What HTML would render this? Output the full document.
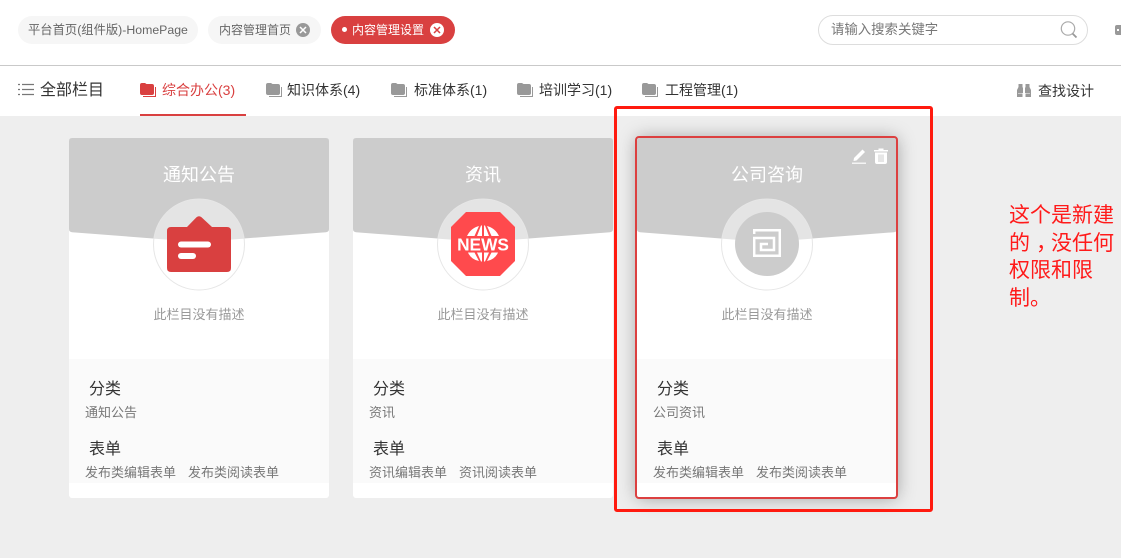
<!DOCTYPE html>
<html lang="zh"><head><meta charset="utf-8"><title>内容管理设置</title>
<style>
*{box-sizing:border-box}
html,body{margin:0;padding:0}
body{width:1121px;height:558px;overflow:hidden;position:relative;background:#fff;font-family:"Liberation Sans","Noto Sans CJK SC",sans-serif;color:#333}
.a,.t{position:absolute}
.t{white-space:nowrap;line-height:20px;height:20px}
.tab{position:absolute;top:16px;height:28px;border-radius:14px;background:#f6f6f6}
.card{position:absolute;top:138px;width:260px;height:360px;background:#fff;border-radius:3px}
.foot{position:absolute;left:0;top:221px;width:260px;height:124px;background:#fafafa}
.hd{position:absolute;left:0;top:0}
.title{position:absolute;left:0;width:260px;text-align:center;top:25px;line-height:24px;font-size:18px;color:#fff}
.desc{position:absolute;left:0;width:260px;text-align:center;top:167px;line-height:20px;font-size:13px;color:#999}
.h{position:absolute;left:20px;font-size:16px;line-height:20px;color:#333}
.s{position:absolute;left:16px;font-size:13px;line-height:20px;color:#777;white-space:nowrap}
.nav{font-size:14px;color:#333;top:80px}
</style></head><body>

<div class="tab" style="left:18px;width:180px"></div>
<div class="t" style="left:28px;top:20px;font-size:12.3px;color:#666">平台首页(组件版)-HomePage</div>
<div class="tab" style="left:208px;width:113px"></div>
<div class="t" style="left:219px;top:20px;font-size:12px;color:#666">内容管理首页</div>
<svg class="a" style="left:296px;top:23px" width="14" height="14" viewBox="0 0 14 14"><circle cx="7" cy="7" r="7" fill="#999"/><path d="M4 4l6 6M10 4l-6 6" stroke="#fff" stroke-width="1.500"/></svg>
<div class="tab" style="left:331px;width:124px;background:#d94040"></div>
<div class="a" style="left:342px;top:27px;width:5px;height:5px;border-radius:50%;background:#fff"></div>
<div class="t" style="left:352px;top:20px;font-size:12px;color:#fff">内容管理设置</div>
<svg class="a" style="left:430px;top:23px" width="14" height="14" viewBox="0 0 14 14"><circle cx="7" cy="7" r="7" fill="#fff"/><path d="M4 4l6 6M10 4l-6 6" stroke="#d94040" stroke-width="1.500"/></svg>

<div class="a" style="left:818px;top:15px;width:270px;height:30px;border:1px solid #ddd;border-radius:15px;background:#fff"></div>
<div class="t" style="left:831px;top:20px;font-size:13.4px;color:#777">请输入搜索关键字</div>
<svg class="a" style="left:1060px;top:20px" width="18" height="20" viewBox="0 0 18 20"><circle cx="8" cy="8.500" r="6.700" fill="none" stroke="#aaa" stroke-width="1.200"/><path d="M12.500 13.500l4 4" stroke="#999" stroke-width="1.800"/></svg>
<div class="a" style="left:1115px;top:25px;width:6px;height:10px;background:#999;border-radius:2px 0 0 2px"></div>
<div class="a" style="left:1117px;top:29px;width:2px;height:2px;background:#fff"></div>

<div class="a" style="left:0;top:65px;width:1121px;height:1px;background:#c9c9c9"></div>
<div class="a" style="left:0;top:116px;width:1121px;height:442px;background:#eee"></div>

<svg class="a" style="left:18px;top:83px" width="17" height="14" viewBox="0 0 17 14"><path d="M0 1.500h2M4 1.500h12M0 6.500h2M4 6.500h12M0 11.500h2M4 11.500h12" stroke="#777" stroke-width="1.300"/></svg>
<div class="t" style="left:40px;top:81px;font-size:16px;color:#333">全部栏目</div>

<svg class="a" style="left:140px;top:82px" width="17" height="16" viewBox="0 0 17 16"><path d="M0 3q0-2 2-2h3l1.500 1H12q2 0 2 2V11q0 2-2 2H2q-2 0-2-2z" fill="#d94040"/><path d="M15.500 5v9.500H3" fill="none" stroke="#d94040" stroke-width="1"/></svg>
<div class="t nav" style="left:162px;color:#d94040">综合办公(3)</div>
<div class="a" style="left:140px;top:114px;width:106px;height:2px;background:#d94040"></div>

<svg class="a" style="left:266px;top:82px" width="17" height="16" viewBox="0 0 17 16"><path d="M0 3q0-2 2-2h3l1.500 1H12q2 0 2 2V11q0 2-2 2H2q-2 0-2-2z" fill="#999"/><path d="M15.500 5v9.500H3" fill="none" stroke="#999" stroke-width="1"/></svg>
<div class="t nav" style="left:287px">知识体系(4)</div>
<svg class="a" style="left:391px;top:82px" width="17" height="16" viewBox="0 0 17 16"><path d="M0 3q0-2 2-2h3l1.500 1H12q2 0 2 2V11q0 2-2 2H2q-2 0-2-2z" fill="#999"/><path d="M15.500 5v9.500H3" fill="none" stroke="#999" stroke-width="1"/></svg>
<div class="t nav" style="left:414px">标准体系(1)</div>
<svg class="a" style="left:517px;top:82px" width="17" height="16" viewBox="0 0 17 16"><path d="M0 3q0-2 2-2h3l1.500 1H12q2 0 2 2V11q0 2-2 2H2q-2 0-2-2z" fill="#999"/><path d="M15.500 5v9.500H3" fill="none" stroke="#999" stroke-width="1"/></svg>
<div class="t nav" style="left:539px">培训学习(1)</div>
<svg class="a" style="left:642px;top:82px" width="17" height="16" viewBox="0 0 17 16"><path d="M0 3q0-2 2-2h3l1.500 1H12q2 0 2 2V11q0 2-2 2H2q-2 0-2-2z" fill="#999"/><path d="M15.500 5v9.500H3" fill="none" stroke="#999" stroke-width="1"/></svg>
<div class="t nav" style="left:665px">工程管理(1)</div>

<svg class="a" style="left:1017px;top:84px" width="14" height="13" viewBox="0 0 14 13"><path d="M1.500 0H5.500V3.500H6V9H1V13H0V6L1.500 3ZM8.500 0H12.500V3L14 6V13H13V9H8V3.500H8.500ZM0 9.500H5.500V13H0ZM8.500 9.500H14V13H8.500Z" fill="#999"/></svg>
<div class="t" style="left:1038px;top:81px;font-size:14px;color:#333">查找设计</div>

<!-- Card 1 -->
<div class="card" style="left:69px">
<svg class="hd" width="260" height="160"><defs><clipPath id="c1"><circle cx="130" cy="106.500" r="45.500"/></clipPath></defs><path d="M0 3Q0 0 3 0H257Q260 0 260 3V91Q260 94 257 94.200L130 104 3 94.200Q0 94 0 91Z" fill="#ccc"/><circle cx="130" cy="106.500" r="45.500" fill="#fff"/><path d="M0 0H260V94.200L130 104 0 94.200Z" fill="#e4e4e4" clip-path="url(#c1)"/><circle cx="130" cy="106.500" r="45.500" fill="none" stroke="#e6e6e6"/></svg>
<div class="title">通知公告</div>
<svg class="a" style="left:98px;top:78px" width="64" height="56" viewBox="0 0 64 56"><path d="M4 11H20L29.500 1.200Q32-.8 34.500 1.200L45 11H60Q64 11 64 15V52Q64 56 60 56H4Q0 56 0 52V15Q0 11 4 11Z" fill="#d94040"/><rect x="11" y="25.500" width="33" height="6" rx="3" fill="#fff"/><rect x="11" y="37" width="18" height="6" rx="3" fill="#fff"/></svg>
<div class="desc">此栏目没有描述</div>
<div class="foot"></div>
<div class="h" style="top:242px">分类</div>
<div class="s" style="top:265px">通知公告</div>
<div class="h" style="top:302px">表单</div>
<div class="s" style="top:325px">发布类编辑表单</div>
<div class="s" style="top:325px;left:119px">发布类阅读表单</div>
</div>

<!-- Card 2 -->
<div class="card" style="left:353px">
<svg class="hd" width="260" height="160"><defs><clipPath id="c2"><circle cx="130" cy="106.500" r="45.500"/></clipPath></defs><path d="M0 3Q0 0 3 0H257Q260 0 260 3V91Q260 94 257 94.200L130 104 3 94.200Q0 94 0 91Z" fill="#ccc"/><circle cx="130" cy="106.500" r="45.500" fill="#fff"/><path d="M0 0H260V94.200L130 104 0 94.200Z" fill="#e4e4e4" clip-path="url(#c2)"/><circle cx="130" cy="106.500" r="45.500" fill="none" stroke="#e6e6e6"/></svg>
<div class="title">资讯</div>
<svg class="a" style="left:98px;top:74px" width="64" height="64" viewBox="0 0 64 64"><path d="M15 0H49L64 15V49L49 64H15L0 49V15Z" fill="#ff4a4d"/><path d="M16 24Q20 16 28 14L23.500 24ZM26 24L30 13.500H31V24ZM33 24V13.500H34L38 24ZM40.500 24L36 14Q44 16 48 24ZM17 40.500H23.500L28 49Q20 47.500 17 40.500ZM26 40.500H31V49.500H30ZM33 40.500H38L34 49.500H33ZM40.500 40.500H47Q44 47.500 36 49Z" fill="#fff"/><text x="32" y="38.500" text-anchor="middle" font-family="Liberation Sans" font-weight="bold" font-size="17.300" fill="#fff">NEWS</text></svg>
<div class="desc">此栏目没有描述</div>
<div class="foot"></div>
<div class="h" style="top:242px">分类</div>
<div class="s" style="top:265px">资讯</div>
<div class="h" style="top:302px">表单</div>
<div class="s" style="top:325px">资讯编辑表单</div>
<div class="s" style="top:325px;left:106px">资讯阅读表单</div>
</div>

<!-- Card 3 -->
<div class="card" style="left:637px;box-shadow:0 0 18px rgba(0,0,0,.34)">
<svg class="hd" width="260" height="160"><defs><clipPath id="c3"><circle cx="130" cy="106.500" r="45.500"/></clipPath></defs><path d="M0 3Q0 0 3 0H257Q260 0 260 3V91Q260 94 257 94.200L130 104 3 94.200Q0 94 0 91Z" fill="#ccc"/><circle cx="130" cy="106.500" r="45.500" fill="#fff"/><path d="M0 0H260V94.200L130 104 0 94.200Z" fill="#e4e4e4" clip-path="url(#c3)"/><circle cx="130" cy="106.500" r="45.500" fill="none" stroke="#e6e6e6"/></svg>
<div class="title">公司咨询</div>
<div class="a" style="left:98px;top:74px;width:64px;height:64px;border-radius:50%;background:#ccc"></div>
<svg class="a" style="left:116px;top:91px" width="28" height="28" viewBox="0 0 28 28"><path d="M1.200 5V1.200H26.800V26.800H1.200V9H21V21H8V15H15" fill="none" stroke="#fff" stroke-width="2.500"/></svg>
<svg class="a" style="left:215px;top:10px" width="15" height="16" viewBox="0 0 15 16"><path d="M2 10L10.500 1.500 13 4 4.500 12.500 1.500 13Z" fill="#fff"/><path d="M0 15.200H14" stroke="#fff" stroke-width="1.200"/></svg>
<svg class="a" style="left:237px;top:10px" width="14" height="16" viewBox="0 0 14 16"><path d="M0 2H4.500V.5H9.500V2H14V3.500H0ZM1 4.500H13V14Q13 16 11 16H3Q1 16 1 14Z" fill="#fff"/><path d="M5 6.500V14M7 6.500V14M9 6.500V14" stroke="#ccc" stroke-width="1"/></svg>
<div class="desc">此栏目没有描述</div>
<div class="foot"></div>
<div class="h" style="top:242px">分类</div>
<div class="s" style="top:265px">公司资讯</div>
<div class="h" style="top:302px">表单</div>
<div class="s" style="top:325px">发布类编辑表单</div>
<div class="s" style="top:325px;left:119px">发布类阅读表单</div>
<div class="a" style="left:-2px;top:-2px;width:263px;height:363px;border:2px solid #dc4040;border-radius:4px"></div>
</div>

<!-- Annotation -->
<div class="a" style="left:614px;top:106px;width:319px;height:406px;border:3px solid #ff1a0f;border-radius:3px"></div>
<div class="a" style="left:1009px;top:202px;width:112px;font-size:21px;line-height:27.600px;color:#ff1a1a;white-space:nowrap">这个是新建<br>的<span style="position:relative;left:6px">，</span>没任何<br>权限和限<br>制。</div>
</body></html>
